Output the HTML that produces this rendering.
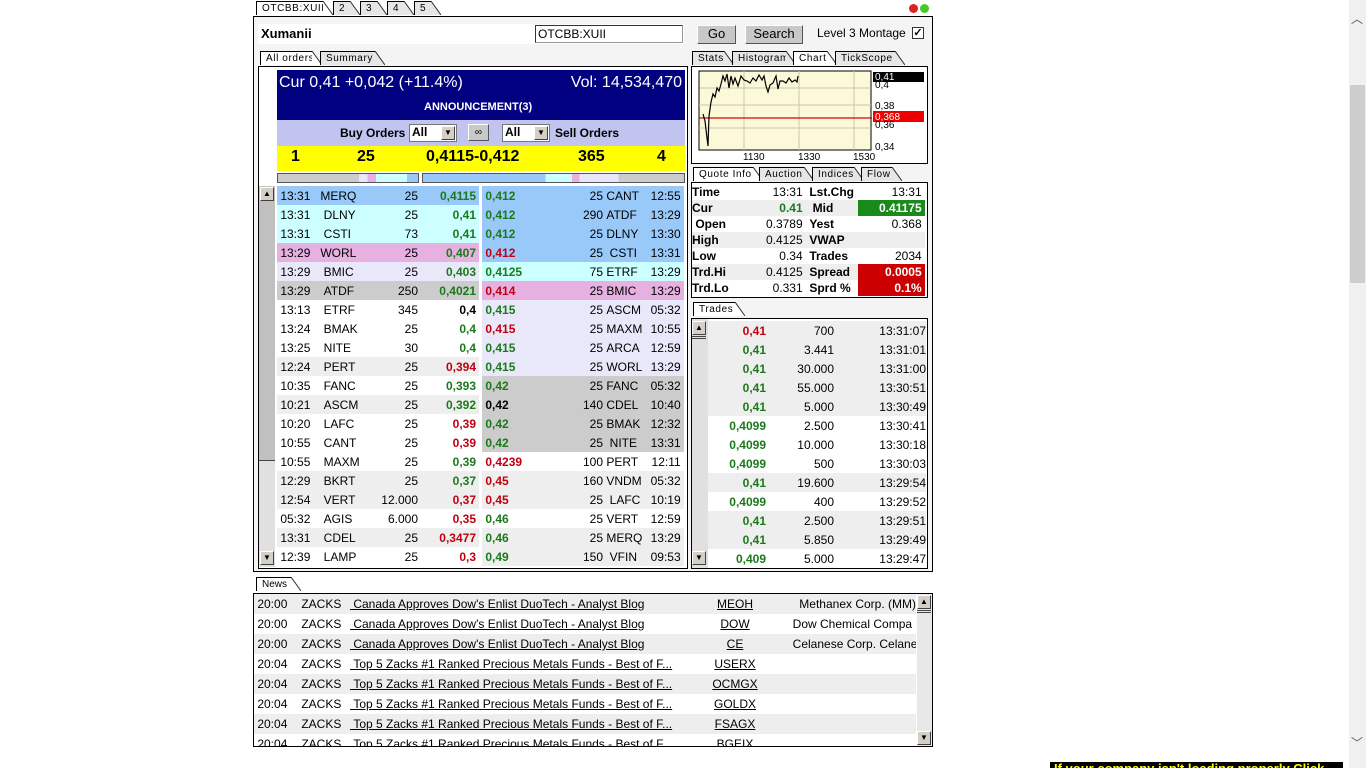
<!DOCTYPE html>
<html><head><meta charset="utf-8"><style>
*{margin:0;padding:0;box-sizing:border-box}
body{width:1366px;height:768px;background:#fff;font-family:"Liberation Sans",Arial,sans-serif;font-size:12px;color:#000;position:relative;overflow:hidden}
.a{position:absolute}
.tab{position:absolute;height:14px;border:1px solid #000;border-bottom:none;border-right:none;background:#e6e6e6;font-size:10px;line-height:13px;padding-left:5px;letter-spacing:.6px;white-space:nowrap}
.tab.on{background:#fff}
.tab:after{content:"";position:absolute;right:-10px;top:-1px;width:10px;height:14px;background:linear-gradient(to top right,#e6e6e6 0,#e6e6e6 calc(50% - .8px),#000 50%,transparent calc(50% + .8px))}
.tab.on:after{background:linear-gradient(to top right,#fff 0,#fff calc(50% - .8px),#000 50%,transparent calc(50% + .8px))}
.box{position:absolute;border:1px solid #000;background:#fff}
table{border-collapse:collapse;table-layout:fixed}
td{padding:0;white-space:nowrap;overflow:hidden}
.o td{height:19px;font-size:12px}
.r{text-align:right}
.g{color:#1a7a1a;font-weight:bold}
.d{color:#c00010;font-weight:bold}
.k{font-weight:bold}
.lb{background:#99c9f9}.cy{background:#ccffff}.pk{background:#e6b0e0}.lv{background:#e8e8fa}.gr{background:#cccccc}.lg{background:#eeeeee}.wh{background:#fff}
.btn{position:absolute;background:#c8c8c8;border:1px solid #fff;border-right-color:#555;border-bottom-color:#555;text-align:center;font-size:13px;line-height:16px}
.sb{position:absolute;width:14px;height:14px;background:#d4d0c8;border:1px solid #fff;border-right-color:#404040;border-bottom-color:#404040;font-size:8px;line-height:12px;text-align:center}
.q td{height:16px;font-size:12px}
.t td{height:19px;font-size:12px}
.n td{height:20px;font-size:12px}
.u{text-decoration:underline}
</style></head><body>

<div class="tab on" style="left:256px;top:1px;width:67px">OTCBB:XUII</div>
<div class="tab" style="left:333px;top:1px;width:17px">2</div>
<div class="tab" style="left:360px;top:1px;width:17px">3</div>
<div class="tab" style="left:387px;top:1px;width:17px">4</div>
<div class="tab" style="left:414px;top:1px;width:17px">5</div>
<div class="a" style="left:909px;top:4px;width:9px;height:9px;border-radius:50%;background:#d22"></div>
<div class="a" style="left:920px;top:4px;width:9px;height:9px;border-radius:50%;background:#4c2"></div>

<div class="box" style="left:253px;top:16px;width:680px;height:556px;background:#f4f4f4"></div>
<div class="a" style="left:258px;top:24px;width:426px;height:20px;background:#fff"></div>
<div class="a k" style="left:261px;top:26px;font-size:13px">Xumanii</div>
<div class="a" style="left:535px;top:25px;width:148px;height:18px;background:#fff;border:1px solid #999;border-top-color:#333;border-left-color:#333;font-size:12px;padding:1px 2px">OTCBB:XUII</div>
<div class="btn" style="left:697px;top:25px;width:39px;height:19px">Go</div>
<div class="btn" style="left:745px;top:25px;width:58px;height:19px">Search</div>
<div class="a" style="left:817px;top:26px;font-size:12px">Level 3 Montage</div>
<div class="a" style="left:912px;top:27px;width:12px;height:12px;border:1px solid #333;background:#fff;font-size:11px;line-height:10px;text-align:center;font-weight:bold">✓</div>

<div class="tab on" style="left:260px;top:51px;width:52px">All orders</div>
<div class="tab" style="left:320px;top:51px;width:55px">Summary</div>
<div class="tab" style="left:692px;top:51px;width:32px">Stats</div>
<div class="tab" style="left:732px;top:51px;width:54px">Histogram</div>
<div class="tab on" style="left:793px;top:51px;width:34px">Chart</div>
<div class="tab" style="left:835px;top:51px;width:60px">TickScope</div>

<!-- left panel -->
<div class="box" style="left:258px;top:66px;width:430px;height:503px"></div>
<div class="a" style="left:277px;top:70px;width:408px;height:50px;background:#000080;color:#fff"></div>
<div class="a" style="left:279px;top:74px;color:#fff;font-size:16px">Cur 0,41 +0,042 (+11.4%)</div>
<div class="a" style="right:684px;top:74px;color:#fff;font-size:16px">Vol: 14,534,470</div>
<div class="a k" style="left:424px;top:101px;color:#fff;font-size:11px">ANNOUNCEMENT(3)</div>
<div class="a" style="left:277px;top:120px;width:408px;height:26px;background:#c0c4ee"></div>
<div class="a k" style="left:340px;top:126px;font-size:12px">Buy Orders</div>
<div class="a" style="left:409px;top:124px;width:48px;height:18px;background:#fff;border:1px solid #777;font-size:12px;font-weight:bold;padding-left:2px">All<div class="sb" style="right:1px;top:1px">▼</div></div>
<div class="btn" style="left:468px;top:124px;width:21px;height:17px;font-size:10px">∞</div>
<div class="a" style="left:502px;top:124px;width:48px;height:18px;background:#fff;border:1px solid #777;font-size:12px;font-weight:bold;padding-left:2px">All<div class="sb" style="right:1px;top:1px">▼</div></div>
<div class="a k" style="left:555px;top:126px;font-size:12px">Sell Orders</div>
<div class="a" style="left:277px;top:146px;width:408px;height:25px;background:#ffff00"></div>
<div class="a k" style="left:291px;top:148px;font-size:16px">1</div>
<div class="a k" style="left:357px;top:148px;font-size:16px">25</div>
<div class="a k" style="left:426px;top:148px;font-size:16px">0,4115-0,412</div>
<div class="a k" style="left:578px;top:148px;font-size:16px">365</div>
<div class="a k" style="left:657px;top:148px;font-size:16px">4</div>
<div class="a" style="left:277px;top:173px;width:142px;height:10px;border:1px solid #555;background:linear-gradient(90deg,#ccc 0 58%,#e8e8fa 58% 64%,#e6b0e0 64% 70%,#ccffff 70% 92%,#99c9f9 92%)"></div>
<div class="a" style="left:422px;top:173px;width:263px;height:10px;border:1px solid #555;background:linear-gradient(90deg,#99c9f9 0 47%,#ccffff 47% 57%,#e6b0e0 57% 60%,#e8e8fa 60% 75%,#ccc 75%)"></div>

<div class="a" style="left:259px;top:186px;width:16px;height:381px;background:#c0c0c0"></div>
<div class="a" style="left:259px;top:460px;width:16px;height:107px;background:#e0e0e0;border-top:1px solid #444"></div>
<div class="sb" style="left:260px;top:187px">▲</div>
<div class="sb" style="left:260px;top:551px">▼</div>

<table class="a o" style="left:277px;top:186px;width:202px">
<colgroup><col style="width:40px"><col style="width:50px"><col style="width:51px"><col style="width:58px"><col style="width:3px"></colgroup>
<tr class="lb"><td>&nbsp;13:31</td><td>&nbsp;MERQ</td><td class="r">25</td><td class="r g">0,4115</td><td></td></tr>
<tr class="cy"><td>&nbsp;13:31</td><td>&nbsp;&nbsp;DLNY</td><td class="r">25</td><td class="r g">0,41</td><td></td></tr>
<tr class="cy"><td>&nbsp;13:31</td><td>&nbsp;&nbsp;CSTI</td><td class="r">73</td><td class="r g">0,41</td><td></td></tr>
<tr class="pk"><td>&nbsp;13:29</td><td>&nbsp;WORL</td><td class="r">25</td><td class="r g">0,407</td><td></td></tr>
<tr class="lv"><td>&nbsp;13:29</td><td>&nbsp;&nbsp;BMIC</td><td class="r">25</td><td class="r g">0,403</td><td></td></tr>
<tr class="gr"><td>&nbsp;13:29</td><td>&nbsp;&nbsp;ATDF</td><td class="r">250</td><td class="r g">0,4021</td><td></td></tr>
<tr class="wh"><td>&nbsp;13:13</td><td>&nbsp;&nbsp;ETRF</td><td class="r">345</td><td class="r k">0,4</td><td></td></tr>
<tr class="wh"><td>&nbsp;13:24</td><td>&nbsp;&nbsp;BMAK</td><td class="r">25</td><td class="r g">0,4</td><td></td></tr>
<tr class="wh"><td>&nbsp;13:25</td><td>&nbsp;&nbsp;NITE</td><td class="r">30</td><td class="r g">0,4</td><td></td></tr>
<tr class="lg"><td>&nbsp;12:24</td><td>&nbsp;&nbsp;PERT</td><td class="r">25</td><td class="r d">0,394</td><td></td></tr>
<tr class="wh"><td>&nbsp;10:35</td><td>&nbsp;&nbsp;FANC</td><td class="r">25</td><td class="r g">0,393</td><td></td></tr>
<tr class="lg"><td>&nbsp;10:21</td><td>&nbsp;&nbsp;ASCM</td><td class="r">25</td><td class="r g">0,392</td><td></td></tr>
<tr class="wh"><td>&nbsp;10:20</td><td>&nbsp;&nbsp;LAFC</td><td class="r">25</td><td class="r d">0,39</td><td></td></tr>
<tr class="wh"><td>&nbsp;10:55</td><td>&nbsp;&nbsp;CANT</td><td class="r">25</td><td class="r d">0,39</td><td></td></tr>
<tr class="wh"><td>&nbsp;10:55</td><td>&nbsp;&nbsp;MAXM</td><td class="r">25</td><td class="r g">0,39</td><td></td></tr>
<tr class="lg"><td>&nbsp;12:29</td><td>&nbsp;&nbsp;BKRT</td><td class="r">25</td><td class="r g">0,37</td><td></td></tr>
<tr class="lg"><td>&nbsp;12:54</td><td>&nbsp;&nbsp;VERT</td><td class="r">12.000</td><td class="r d">0,37</td><td></td></tr>
<tr class="wh"><td>&nbsp;05:32</td><td>&nbsp;&nbsp;AGIS</td><td class="r">6.000</td><td class="r d">0,35</td><td></td></tr>
<tr class="lg"><td>&nbsp;13:31</td><td>&nbsp;&nbsp;CDEL</td><td class="r">25</td><td class="r d">0,3477</td><td></td></tr>
<tr class="wh"><td>&nbsp;12:39</td><td>&nbsp;&nbsp;LAMP</td><td class="r">25</td><td class="r d">0,3</td><td></td></tr>
</table>

<table class="a o" style="left:482px;top:186px;width:202px">
<colgroup><col style="width:62px"><col style="width:59px"><col style="width:43px"><col style="width:38px"></colgroup>
<tr class="lb"><td class="g">&nbsp;0,412</td><td class="r">25</td><td>&nbsp;CANT</td><td class="r">12:55&nbsp;</td></tr>
<tr class="lb"><td class="g">&nbsp;0,412</td><td class="r">290</td><td>&nbsp;ATDF</td><td class="r">13:29&nbsp;</td></tr>
<tr class="lb"><td class="g">&nbsp;0,412</td><td class="r">25</td><td>&nbsp;DLNY</td><td class="r">13:30&nbsp;</td></tr>
<tr class="lb"><td class="d">&nbsp;0,412</td><td class="r">25</td><td>&nbsp;&nbsp;CSTI</td><td class="r">13:31&nbsp;</td></tr>
<tr class="cy"><td class="g">&nbsp;0,4125</td><td class="r">75</td><td>&nbsp;ETRF</td><td class="r">13:29&nbsp;</td></tr>
<tr class="pk"><td class="d">&nbsp;0,414</td><td class="r">25</td><td>&nbsp;BMIC</td><td class="r">13:29&nbsp;</td></tr>
<tr class="lv"><td class="g">&nbsp;0,415</td><td class="r">25</td><td>&nbsp;ASCM</td><td class="r">05:32&nbsp;</td></tr>
<tr class="lv"><td class="d">&nbsp;0,415</td><td class="r">25</td><td>&nbsp;MAXM</td><td class="r">10:55&nbsp;</td></tr>
<tr class="lv"><td class="g">&nbsp;0,415</td><td class="r">25</td><td>&nbsp;ARCA</td><td class="r">12:59&nbsp;</td></tr>
<tr class="lv"><td class="g">&nbsp;0,415</td><td class="r">25</td><td>&nbsp;WORL</td><td class="r">13:29&nbsp;</td></tr>
<tr class="gr"><td class="g">&nbsp;0,42</td><td class="r">25</td><td>&nbsp;FANC</td><td class="r">05:32&nbsp;</td></tr>
<tr class="gr"><td class="k">&nbsp;0,42</td><td class="r">140</td><td>&nbsp;CDEL</td><td class="r">10:40&nbsp;</td></tr>
<tr class="gr"><td class="g">&nbsp;0,42</td><td class="r">25</td><td>&nbsp;BMAK</td><td class="r">12:32&nbsp;</td></tr>
<tr class="gr"><td class="g">&nbsp;0,42</td><td class="r">25</td><td>&nbsp;&nbsp;NITE</td><td class="r">13:31&nbsp;</td></tr>
<tr class="wh"><td class="d">&nbsp;0,4239</td><td class="r">100</td><td>&nbsp;PERT</td><td class="r">12:11&nbsp;</td></tr>
<tr class="lg"><td class="d">&nbsp;0,45</td><td class="r">160</td><td>&nbsp;VNDM</td><td class="r">05:32&nbsp;</td></tr>
<tr class="lg"><td class="d">&nbsp;0,45</td><td class="r">25</td><td>&nbsp;&nbsp;LAFC</td><td class="r">10:19&nbsp;</td></tr>
<tr class="wh"><td class="g">&nbsp;0,46</td><td class="r">25</td><td>&nbsp;VERT</td><td class="r">12:59&nbsp;</td></tr>
<tr class="lg"><td class="g">&nbsp;0,46</td><td class="r">25</td><td>&nbsp;MERQ</td><td class="r">13:29&nbsp;</td></tr>
<tr class="lg"><td class="g">&nbsp;0,49</td><td class="r">150</td><td>&nbsp;&nbsp;VFIN</td><td class="r">09:53&nbsp;</td></tr>
</table>

<!-- chart -->
<div class="box" style="left:691px;top:66px;width:237px;height:98px"></div>
<svg class="a" style="left:691px;top:66px" width="237" height="98">
<rect x="8" y="5" width="172" height="79" fill="#fbf9d8" stroke="#000"/>
<g stroke="#c8c8b0" stroke-width="1">
<line x1="8.5" y1="22" x2="180" y2="22"/><line x1="8" y1="39" x2="180" y2="39"/><line x1="8" y1="62" x2="180" y2="62"/>
<line x1="53" y1="5" x2="53" y2="84"/><line x1="108" y1="5" x2="108" y2="84"/><line x1="163" y1="5" x2="163" y2="84"/>
</g>
<line x1="8" y1="52" x2="181" y2="52" stroke="#d00" stroke-width="1.2"/>
<polyline fill="none" stroke="#000" stroke-width="1.2" points="12,48 14,55 16,72 17,80 18,50 20,36 22,28 24,31 26,22 28,25 30,18 32,10 34,15 36,8 38,22 40,10 42,18 44,12 47,20 50,10 53,14 56,15 59,17 62,12 65,15 68,9 71,14 73,10 75,20 77,26 79,19 82,17 85,10 87,23 89,15 92,15 95,17 98,12 101,16 104,14 106,16 107,10"/>
<rect x="182" y="6" width="51" height="10" fill="#000"/>
<rect x="182" y="45" width="51" height="11" fill="#e00"/>
<g font-family="Liberation Sans,Arial" font-size="10">
<text x="184" y="14" fill="#fff">0,41</text><text x="184" y="22">0,4</text>
<text x="184" y="43">0,38</text><text x="184" y="54" fill="#fff">0,368</text><text x="184" y="62">0,36</text>
<text x="184" y="84">0,34</text>
<text x="52" y="94">1130</text><text x="107" y="94">1330</text><text x="162" y="94">1530</text>
</g>
</svg>

<div class="tab on" style="left:693px;top:167px;width:60px">Quote Info</div>
<div class="tab" style="left:759px;top:167px;width:45px">Auction</div>
<div class="tab" style="left:812px;top:167px;width:42px">Indices</div>
<div class="tab" style="left:861px;top:167px;width:31px">Flow</div>
<div class="box" style="left:691px;top:182px;width:237px;height:116px"></div>
<table class="a q" style="left:692px;top:184px;width:233px">
<colgroup><col style="width:46px"><col style="width:68px"><col style="width:52px"><col style="width:67px"></colgroup>
<tr><td class="k">Time</td><td class="r">13:31&nbsp;</td><td class="k">&nbsp;Lst.Chg</td><td class="r">13:31&nbsp;</td></tr>
<tr class="lg"><td class="k">Cur</td><td class="r g">0.41&nbsp;</td><td class="k">&nbsp;&nbsp;Mid</td><td class="r k" style="background:#1a8a1a;color:#fff">0.41175&nbsp;</td></tr>
<tr><td class="k">&nbsp;Open</td><td class="r">0.3789&nbsp;</td><td class="k">&nbsp;Yest</td><td class="r">0.368&nbsp;</td></tr>
<tr class="lg"><td class="k">High</td><td class="r">0.4125&nbsp;</td><td class="k">&nbsp;VWAP</td><td></td></tr>
<tr><td class="k">Low</td><td class="r">0.34&nbsp;</td><td class="k">&nbsp;Trades</td><td class="r">2034&nbsp;</td></tr>
<tr class="lg"><td class="k">Trd.Hi</td><td class="r">0.4125&nbsp;</td><td class="k">&nbsp;Spread</td><td class="r k" style="background:#cc0000;color:#fff">0.0005&nbsp;</td></tr>
<tr><td class="k">Trd.Lo</td><td class="r">0.331&nbsp;</td><td class="k">&nbsp;Sprd %</td><td class="r k" style="background:#cc0000;color:#fff">0.1%&nbsp;</td></tr>
</table>

<div class="tab on" style="left:693px;top:302px;width:42px">Trades</div>
<div class="box" style="left:691px;top:318px;width:237px;height:251px"></div>
<div class="a" style="left:692px;top:319px;width:16px;height:249px;background:#e0e0e0"></div>
<div class="sb" style="left:692px;top:321px">▲</div>
<div class="a" style="left:692px;top:336px;width:14px;height:3px;border-top:1px solid #444;border-bottom:1px solid #444"></div>
<div class="sb" style="left:692px;top:551px">▼</div>
<table class="a t" style="left:708px;top:321px;width:218px">
<colgroup><col style="width:58px"><col style="width:68px"><col style="width:92px"></colgroup>
<tr class="lg"><td class="r d">0,41</td><td class="r">700</td><td class="r">13:31:07</td></tr>
<tr class="lg"><td class="r g">0,41</td><td class="r">3.441</td><td class="r">13:31:01</td></tr>
<tr class="lg"><td class="r g">0,41</td><td class="r">30.000</td><td class="r">13:31:00</td></tr>
<tr class="lg"><td class="r g">0,41</td><td class="r">55.000</td><td class="r">13:30:51</td></tr>
<tr class="lg"><td class="r g">0,41</td><td class="r">5.000</td><td class="r">13:30:49</td></tr>
<tr><td class="r g">0,4099</td><td class="r">2.500</td><td class="r">13:30:41</td></tr>
<tr><td class="r g">0,4099</td><td class="r">10.000</td><td class="r">13:30:18</td></tr>
<tr><td class="r g">0,4099</td><td class="r">500</td><td class="r">13:30:03</td></tr>
<tr class="lg"><td class="r g">0,41</td><td class="r">19.600</td><td class="r">13:29:54</td></tr>
<tr><td class="r g">0,4099</td><td class="r">400</td><td class="r">13:29:52</td></tr>
<tr class="lg"><td class="r g">0,41</td><td class="r">2.500</td><td class="r">13:29:51</td></tr>
<tr class="lg"><td class="r g">0,41</td><td class="r">5.850</td><td class="r">13:29:49</td></tr>
<tr><td class="r g">0,409</td><td class="r">5.000</td><td class="r">13:29:47</td></tr>
</table>

<!-- news -->
<div class="tab on" style="left:256px;top:577px;width:35px;font-size:10px;letter-spacing:0">News</div>
<div class="box" style="left:253px;top:593px;width:680px;height:154px;overflow:hidden">
<table class="n" style="width:662px;margin-top:0">
<colgroup><col style="width:44px"><col style="width:52px"><col style="width:334px"><col style="width:102px"><col style="width:130px"></colgroup>
<tr class="lg"><td>&nbsp;20:00</td><td>&nbsp;ZACKS</td><td class="u">&nbsp;Canada Approves Dow's Enlist DuoTech - Analyst Blog</td><td style="text-align:center" class="u">MEOH</td><td class="r">Methanex Corp. (MM)</td></tr>
<tr><td>&nbsp;20:00</td><td>&nbsp;ZACKS</td><td class="u">&nbsp;Canada Approves Dow's Enlist DuoTech - Analyst Blog</td><td style="text-align:center" class="u">DOW</td><td>&nbsp;&nbsp;Dow Chemical Compa</td></tr>
<tr class="lg"><td>&nbsp;20:00</td><td>&nbsp;ZACKS</td><td class="u">&nbsp;Canada Approves Dow's Enlist DuoTech - Analyst Blog</td><td style="text-align:center" class="u">CE</td><td>&nbsp;&nbsp;Celanese Corp. Celane</td></tr>
<tr><td>&nbsp;20:04</td><td>&nbsp;ZACKS</td><td class="u">&nbsp;Top 5 Zacks #1 Ranked Precious Metals Funds - Best of F...</td><td style="text-align:center" class="u">USERX</td><td></td></tr>
<tr class="lg"><td>&nbsp;20:04</td><td>&nbsp;ZACKS</td><td class="u">&nbsp;Top 5 Zacks #1 Ranked Precious Metals Funds - Best of F...</td><td style="text-align:center" class="u">OCMGX</td><td></td></tr>
<tr><td>&nbsp;20:04</td><td>&nbsp;ZACKS</td><td class="u">&nbsp;Top 5 Zacks #1 Ranked Precious Metals Funds - Best of F...</td><td style="text-align:center" class="u">GOLDX</td><td></td></tr>
<tr class="lg"><td>&nbsp;20:04</td><td>&nbsp;ZACKS</td><td class="u">&nbsp;Top 5 Zacks #1 Ranked Precious Metals Funds - Best of F...</td><td style="text-align:center" class="u">FSAGX</td><td></td></tr>
<tr><td>&nbsp;20:04</td><td>&nbsp;ZACKS</td><td class="u">&nbsp;Top 5 Zacks #1 Ranked Precious Metals Funds - Best of F...</td><td style="text-align:center" class="u">BGEIX</td><td></td></tr>
</table>
<div class="a" style="left:663px;top:0;width:15px;height:152px;background:#e8e8e8"></div>
<div class="sb" style="left:663px;top:1px">▲</div>
<div class="a" style="left:663px;top:16px;width:14px;height:3px;border-top:1px solid #444;border-bottom:1px solid #444"></div>
<div class="sb" style="left:663px;top:137px">▼</div>
</div>

<!-- page scrollbar -->
<div class="a" style="left:1349px;top:0;width:17px;height:768px;background:#f0f0f0"></div>
<div class="a" style="left:1350px;top:85px;width:15px;height:198px;background:#cdcdcd"></div>
<div class="a" style="left:1351px;top:10px;font-size:12px;color:#555">︿</div>
<div class="a" style="left:1351px;top:734px;font-size:12px;color:#555">﹀</div>
<div class="a" style="left:1050px;top:762px;width:293px;height:6px;background:#000;overflow:hidden;color:#ff0;font-weight:bold;font-size:13px;line-height:14px;padding-left:4px">If your company isn't loading properly Click here</div>
</body></html>
